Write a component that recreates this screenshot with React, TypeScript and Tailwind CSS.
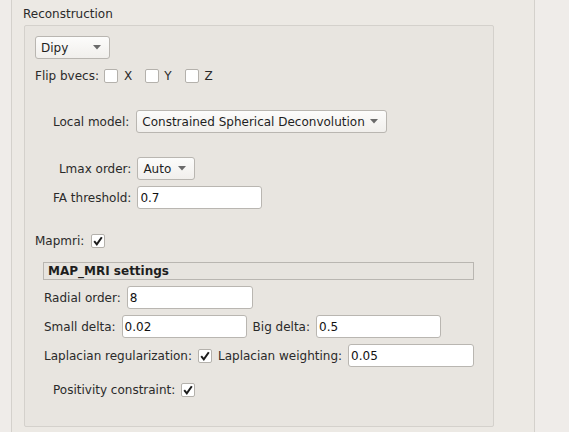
import { ReactNode } from "react";

// Qt-like "Reconstruction" settings panel
const font = { fontFamily: '"DejaVu Sans", "Liberation Sans", sans-serif' };

function Combo({ value, width }: { value: string; width: string }) {
  return (
    <div
      className={`${width} h-[23px] flex items-center justify-between pl-[5px] pr-[8px] rounded-[3px] border border-[#b9b6b1] bg-gradient-to-b from-[#fcfcfb] to-[#f1efec] text-[#1e1e1e]`}
    >
      <span>{value}</span>
      <svg width="8" height="5" viewBox="0 0 8 5">
        <path d="M0 0 L8 0 L4 4.5 Z" fill="#6a6a6a" />
      </svg>
    </div>
  );
}

function Field({ value, width }: { value: string; width: string }) {
  return (
    <div
      className={`${width} h-[23px] flex items-center pl-[2px] rounded-[3px] border border-[#b9b6b1] bg-white text-[#111]`}
    >
      {value}
    </div>
  );
}

function Check({ checked = false }: { checked?: boolean }) {
  return (
    <div className="w-[14px] h-[14px] shrink-0 rounded-[2px] border border-[#b4b1ac] bg-white flex items-center justify-center">
      {checked && (
        <svg width="12" height="12" viewBox="0 0 12 12">
          <path d="M2.2 6.2 L4.8 9.4 L9.8 2.2" fill="none" stroke="#1c1c1c" strokeWidth="2" />
        </svg>
      )}
    </div>
  );
}

function Row({ className, children }: { className: string; children: ReactNode }) {
  return <div className={`flex items-center h-[23px] whitespace-nowrap ${className}`}>{children}</div>;
}

export default function App() {
  return (
    <div className="w-[569px] h-[432px] bg-[#efece9] overflow-hidden text-[12px] text-[#2a2a2a]" style={font}>
      <div className="ml-[11px] w-[524px] h-full border-l border-r border-[#d4d1cc] bg-[#ece9e4] pt-[7px]">
        <div className="pl-[11px] h-[14px] leading-[14px]">Reconstruction</div>

        <div className="mt-[4px] ml-[12px] w-[470px] h-[402px] border border-[#d4d1cc] rounded-[2px] bg-[#e8e5e0] flex flex-col">
          <div className="mt-[10px] ml-[10px]">
            <Combo value="Dipy" width="w-[75px]" />
          </div>

          <Row className="mt-[5px] ml-[10px]">
            <span>Flip bvecs:</span>
            <div className="ml-[5px]"><Check /></div>
            <span className="ml-[6px]">X</span>
            <div className="ml-[13px]"><Check /></div>
            <span className="ml-[5px]">Y</span>
            <div className="ml-[13px]"><Check /></div>
            <span className="ml-[6px]">Z</span>
          </Row>

          <Row className="mt-[23px] ml-[28px]">
            <span>Local model:</span>
            <div className="ml-[7px]">
              <Combo value="Constrained Spherical Deconvolution" width="w-[251px]" />
            </div>
          </Row>

          <div className="mt-[24px] ml-[28px] w-fit grid grid-cols-[auto_auto] gap-x-[6px] gap-y-[6px] items-center whitespace-nowrap">
            <span className="text-right">Lmax order:</span>
            <Combo value="Auto" width="w-[58px]" />
            <span className="text-right">FA threshold:</span>
            <Field value="0.7" width="w-[125px]" />
          </div>

          <Row className="mt-[20px] ml-[10px]">
            <span>Mapmri:</span>
            <div className="ml-[7px]"><Check checked /></div>
          </Row>

          <div className="mt-[10px] ml-[18px] w-[431px] h-[18px] border border-[#b9b6b1] bg-[#e7e4df] pl-[4px] flex items-center font-bold text-[#1e1e1e]">
            MAP_MRI settings
          </div>

          <Row className="mt-[6px] ml-[19px]">
            <span>Radial order:</span>
            <div className="ml-[6px]"><Field value="8" width="w-[126px]" /></div>
          </Row>

          <Row className="mt-[6px] ml-[19px]">
            <span>Small delta:</span>
            <div className="ml-[6px]"><Field value="0.02" width="w-[125px]" /></div>
            <span className="ml-[6px]">Big delta:</span>
            <div className="ml-[6px]"><Field value="0.5" width="w-[125px]" /></div>
          </Row>

          <Row className="mt-[6px] ml-[19px]">
            <span>Laplacian regularization:</span>
            <div className="ml-[6px]"><Check checked /></div>
            <span className="ml-[6px]">Laplacian weighting:</span>
            <div className="ml-[6px]"><Field value="0.05" width="w-[126px]" /></div>
          </Row>

          <Row className="mt-[11px] ml-[28px]">
            <span>Positivity constraint:</span>
            <div className="ml-[6px]"><Check checked /></div>
          </Row>
        </div>
      </div>
    </div>
  );
}
